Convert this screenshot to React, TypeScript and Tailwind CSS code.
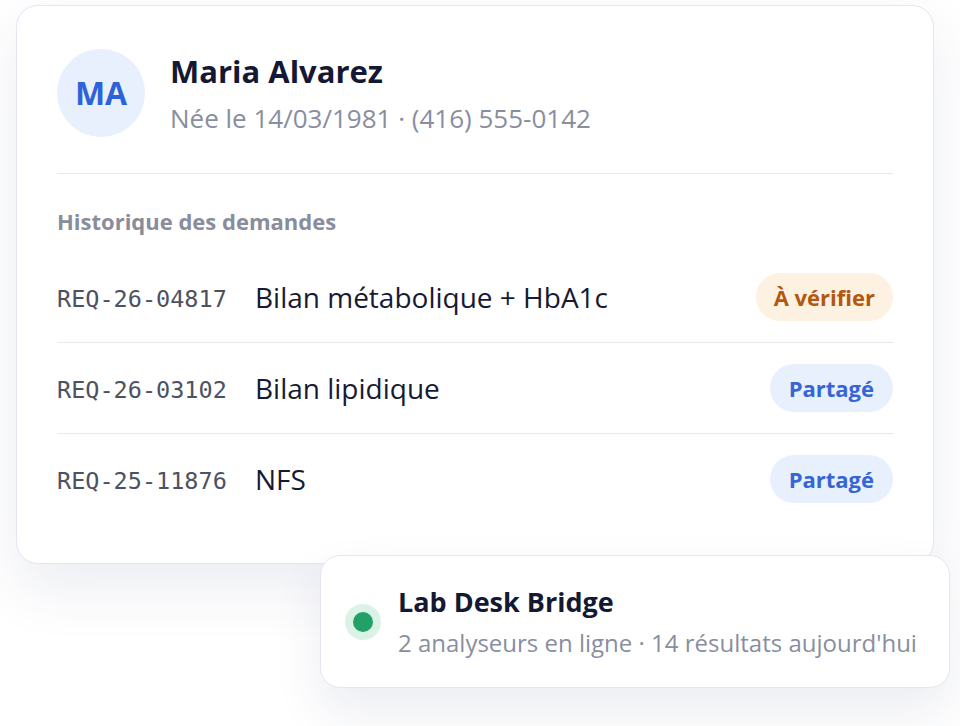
import React from "react";

const rows = [
  { id: "REQ-26-04817", title: "Bilan métabolique + HbA1c", status: "verify" },
  { id: "REQ-26-03102", title: "Bilan lipidique", status: "shared" },
  { id: "REQ-25-11876", title: "NFS", status: "shared" },
];

export default function App() {
  return (
    <div
      className="relative w-[960px] h-[726px] bg-white overflow-hidden"
      style={{ fontFamily: "'Open Sans', 'Noto Sans', sans-serif" }}
    >
      <div className="pt-[5px] pl-[16px]">
        <div className="w-[918px] h-[559px] rounded-[22px] border border-[#e3e6f4] bg-white shadow-[0_24px_60px_rgba(40,50,110,0.09)] px-[40px] pt-[43px]">
          <div className="flex items-center gap-[25px] pb-[36px] border-b border-[#e8e9ef]">
            <div className="w-[88px] h-[88px] rounded-full bg-[#e9f0fd] flex items-center justify-center text-[#2e62d8] text-[32px] font-bold">
              MA
            </div>
            <div className="flex flex-col">
              <div className="text-[31px] leading-[38px] font-bold text-[#141833]">Maria Alvarez</div>
              <div className="mt-[12px] text-[26px] leading-[32px] text-[#898e9f]">
                Née le 14/03/1981 · (416) 555-0142
              </div>
            </div>
          </div>
          <div className="pt-[33px] pb-[17px] text-[22px] leading-[28px] font-bold text-[#898c9b]">
            Historique des demandes
          </div>
          <div className="flex flex-col">
            {rows.map((r, i) => (
              <div
                key={r.id}
                className={
                  "h-[90px] flex items-center " +
                  (i < rows.length - 1 ? "border-b border-[#e8e9ef] h-[91px]" : "")
                }
              >
                <div
                  className="w-[198px] mt-[4px] text-[23.5px] leading-[30px] text-[#4d5261]"
                  style={{ fontFamily: "'DejaVu Sans Mono', 'Liberation Mono', monospace" }}
                >
                  {r.id}
                </div>
                <div className="flex-1 text-[28px] leading-[36px] text-[#171a33]">{r.title}</div>
                {r.status === "verify" ? (
                  <div className="h-[48px] px-[18px] rounded-full bg-[#fdf1e1] text-[#b4570f] text-[22px] font-bold flex items-center">
                    À vérifier
                  </div>
                ) : (
                  <div className="h-[48px] px-[19px] rounded-full bg-[#e9f0fd] text-[#3665d6] text-[22px] font-bold flex items-center">
                    Partagé
                  </div>
                )}
              </div>
            ))}
          </div>
        </div>
      </div>

      <div className="absolute left-[320px] top-[555px] w-[630px] h-[133px] rounded-[20px] border border-[#e3e6f4] bg-white shadow-[0_24px_50px_rgba(40,50,110,0.09)] flex items-center pl-[24px]">
        <div className="w-[36px] h-[36px] rounded-full bg-[#dbf2e6] flex items-center justify-center">
          <div className="w-[20px] h-[20px] rounded-full bg-[#21a068]" />
        </div>
        <div className="ml-[17px] flex flex-col">
          <div className="text-[27px] leading-[34px] font-bold text-[#141833]">Lab Desk Bridge</div>
          <div className="mt-[9px] text-[24px] leading-[30px] text-[#898e9f]">
            2 analyseurs en ligne · 14 résultats aujourd'hui
          </div>
        </div>
      </div>
    </div>
  );
}
